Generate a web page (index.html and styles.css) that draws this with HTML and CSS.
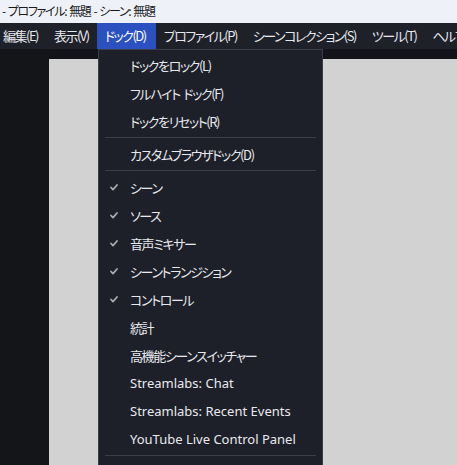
FILE: index.html
```html
<!DOCTYPE html>
<html lang="ja">
<head>
<meta charset="UTF-8">
<title>OBS</title>
<link rel="stylesheet" href="styles.css">
</head>
<body>

<!-- Window title -->
<div class="titlebar">- プロファイル: 無題 - シーン: 無題</div>

<!-- Main menu -->
<div class="menubar">
    <span class="menu-item first">編集(E)</span>
    <span class="menu-item">表示(V)</span>
    <span class="menu-item open">ドック(D)</span>
    <span class="menu-item">プロファイル(P)</span>
    <span class="menu-item">シーンコレクション(S)</span>
    <span class="menu-item">ツール(T)</span>
    <span class="menu-item">ヘルプ(H)</span>
</div>

<div class="workspace">
    <div class="side"></div>
    <div class="main">
        <div class="strip"></div>
        <div class="preview"></div>
    </div>
</div>

<!-- Dock menu dropdown -->
<div class="dropdown">
    <div class="entry"><span class="check"></span>ドックをロック(L)</div>
    <div class="entry"><span class="check"></span>フルハイト ドック(F)</div>
    <div class="entry"><span class="check"></span>ドックをリセット(R)</div>
    <div class="sep"></div>
    <div class="entry"><span class="check"></span>カスタムブラウザドック(D)</div>
    <div class="sep"></div>
    <div class="entry"><span class="check"><svg width="8" height="7" viewBox="0 0 8 7"><path d="M1 3.5 L3 5.6 L7 1" /></svg></span>シーン</div>
    <div class="entry"><span class="check"><svg width="8" height="7" viewBox="0 0 8 7"><path d="M1 3.5 L3 5.6 L7 1" /></svg></span>ソース</div>
    <div class="entry"><span class="check"><svg width="8" height="7" viewBox="0 0 8 7"><path d="M1 3.5 L3 5.6 L7 1" /></svg></span>音声ミキサー</div>
    <div class="entry"><span class="check"><svg width="8" height="7" viewBox="0 0 8 7"><path d="M1 3.5 L3 5.6 L7 1" /></svg></span>シーントランジション</div>
    <div class="entry"><span class="check"><svg width="8" height="7" viewBox="0 0 8 7"><path d="M1 3.5 L3 5.6 L7 1" /></svg></span>コントロール</div>
    <div class="entry"><span class="check"></span>統計</div>
    <div class="entry"><span class="check"></span>高機能シーンスイッチャー</div>
    <div class="entry latin"><span class="check"></span>Streamlabs: Chat</div>
    <div class="entry latin"><span class="check"></span>Streamlabs: Recent Events</div>
    <div class="entry latin"><span class="check"></span>YouTube Live Control Panel</div>
    <div class="sep"></div>
    <div class="entry"><span class="check"></span>&nbsp;</div>
</div>

</body>
</html>
```

FILE: styles.css
```css
body {
    margin: 0;
    width: 457px;
    height: 465px;
    overflow: hidden;
    position: relative;
    font-family: "Noto Sans CJK JP", "Noto Sans", sans-serif;
    font-feature-settings: "palt";
    background-color: #141519;
}
.titlebar {
    height: 23px;
    line-height: 22px;
    padding-left: 2px;
    font-size: 12px;
    letter-spacing: -1.3px;
    word-spacing: 1.5px;
    color: #1a1a1a;
    background-color: #eef1f8;
    white-space: nowrap;
}
.menubar {
    height: 26px;
    display: flex;
    align-items: stretch;
    background-color: #1f2128;
    white-space: nowrap;
    overflow: hidden;
}
.menu-item {
    padding: 0 8px;
    font-size: 13px;
    letter-spacing: -1.5px;
    line-height: 26px;
    color: #e6e8ee;
}
.menu-item.first {
    margin-left: -5px;
}
.menu-item.open {
    padding-right: 10px;
    background-color: #2b50c0;
    color: #ffffff;
}
.workspace {
    display: flex;
    height: 416px;
}
.side {
    width: 49px;
    background-color: #141519;
}
.main {
    flex: 1;
    display: flex;
    flex-direction: column;
}
.strip {
    height: 10px;
    background-color: #131419;
}
.preview {
    flex: 1;
    background-color: #d2d2d2;
}
.dropdown {
    position: absolute;
    left: 98px;
    top: 49px;
    width: 223px;
    padding-top: 1px;
    background-color: #1d2028;
    border: 1px solid #3a3d47;
    border-bottom: none;
}
.entry {
    height: 28px;
    display: flex;
    align-items: center;
    font-size: 13px;
    letter-spacing: -1.4px;
    word-spacing: 2px;
    color: #e8e9ee;
    white-space: nowrap;
}
.entry.latin {
    font-family: "Noto Sans", sans-serif;
    letter-spacing: 0;
    word-spacing: 0;
}
.check {
    width: 31px;
    padding-left: 11px;
    box-sizing: border-box;
    display: flex;
    align-items: center;
}
.check path {
    fill: none;
    stroke: #a7a9ae;
    stroke-width: 1.8;
    stroke-linecap: round;
    stroke-linejoin: round;
}
.sep {
    height: 1px;
    margin: 2px 6px 2px 6px;
    background-color: #3b3e47;
}
```
